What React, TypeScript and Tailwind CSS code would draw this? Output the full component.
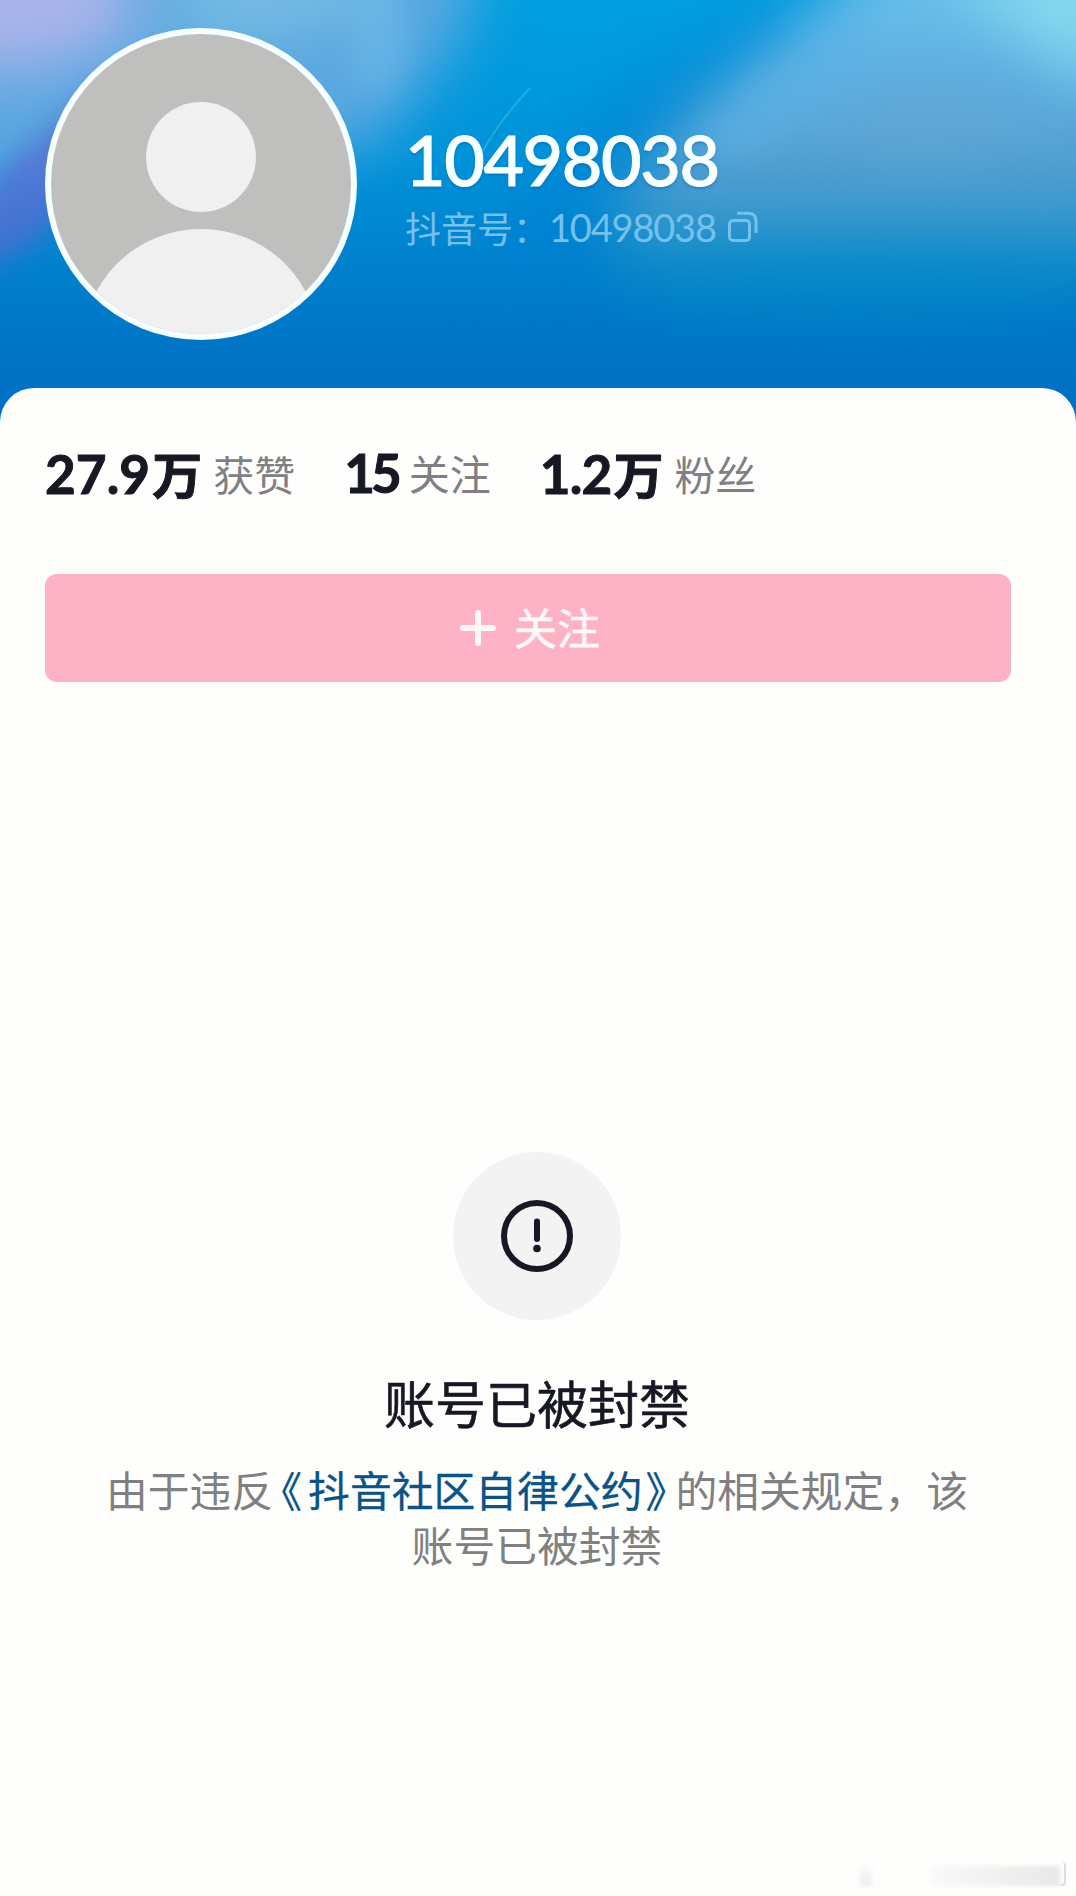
const stats = [
  { value: '27.9', unit: '万', label: '获赞', tracking: 'tracking-[0.1px]' },
  { value: '15', unit: '', label: '关注', tracking: 'tracking-[-4px]' },
  { value: '1.2', unit: '万', label: '粉丝', tracking: 'tracking-[-0.8px]' },
];

function HeaderBackdrop() {
  return (
    <svg
      className="absolute inset-0 h-full w-full"
      viewBox="0 0 1076 430"
      preserveAspectRatio="none"
      aria-hidden="true"
    >
      <defs>
        <linearGradient id="base" x1="0" y1="0" x2="0" y2="1">
          <stop offset="0" stopColor="#009fe0" />
          <stop offset="0.35" stopColor="#0094da" />
          <stop offset="0.65" stopColor="#007fcb" />
          <stop offset="0.82" stopColor="#0074c6" />
          <stop offset="1" stopColor="#006ec2" />
        </linearGradient>
        <linearGradient id="veil" x1="0" y1="0" x2="0" y2="1">
          <stop offset="0" stopColor="#6cc6ec" />
          <stop offset="0.35" stopColor="#60b2e4" />
          <stop offset="0.62" stopColor="#559fd0" />
          <stop offset="0.84" stopColor="#3a98c8" stopOpacity="0.8" />
          <stop offset="1" stopColor="#0088c8" stopOpacity="0" />
        </linearGradient>
        <filter id="soft" x="-50%" y="-50%" width="200%" height="200%" colorInterpolationFilters="sRGB">
          <feGaussianBlur stdDeviation="14" />
        </filter>
        <filter id="softer" x="-80%" y="-80%" width="260%" height="260%" colorInterpolationFilters="sRGB">
          <feGaussianBlur stdDeviation="30" />
        </filter>
      </defs>
      <rect width="1076" height="430" fill="url(#base)" />
      {/* left side glow */}
      <path d="M-80 -80H490L460 40L380 140L200 180L60 170L-80 220Z" fill="#5ca8e0" filter="url(#softer)" />
      <ellipse cx="0" cy="0" rx="140" ry="70" fill="#aab4ea" filter="url(#softer)" />
      <path d="M210 -40H400L340 20L250 34L150 20Z" fill="#86c8e6" opacity="0.7" filter="url(#softer)" />
      <path d="M350 -20H390L410 40L390 100L352 80Z" fill="#74c2ea" opacity="0.4" filter="url(#soft)" />
      <path d="M-60 250L10 160L60 120L110 80L90 170L40 240L-60 290Z" fill="#5a6cd2" opacity="0.75" filter="url(#soft)" />
      {/* darker fold through the middle */}
      <path d="M790 -10L620 110L470 260L500 300L640 180L820 10Z" fill="#007fd4" opacity="0.6" filter="url(#softer)" />
      {/* right side veil */}
      <path d="M890 -60L770 45L690 110L610 210L640 280L900 295L1150 285V-60Z" fill="url(#veil)" filter="url(#softer)" />
      <path d="M850 30L760 80L690 140L740 160L900 70Z" fill="#5cb2e6" opacity="0.5" filter="url(#soft)" />
      <ellipse cx="930" cy="120" rx="90" ry="40" fill="#68a6d2" opacity="0.4" filter="url(#softer)" />
      <path d="M930 -40H1120V90L1050 50Z" fill="#8ee0f0" opacity="0.85" filter="url(#softer)" />
      <ellipse cx="850" cy="285" rx="240" ry="32" fill="#008dc4" opacity="0.5" filter="url(#softer)" />
      <path d="M530 88Q500 120 482 152" stroke="#4bbbe4" strokeWidth="2" fill="none" opacity="0.5" />
    </svg>
  );
}

function Avatar() {
  return (
    <svg className="h-78 w-78 shrink-0" viewBox="0 0 312 312">
      <clipPath id="face">
        <circle cx="156" cy="156" r="150" />
      </clipPath>
      <circle cx="156" cy="156" r="156" fill="#f5ffff" />
      <g clipPath="url(#face)">
        <rect width="312" height="312" fill="#bfbfbe" />
        <circle cx="156" cy="129" r="55" fill="#f0f0f0" />
        <circle cx="156" cy="320" r="119" fill="#f0f0f0" />
      </g>
    </svg>
  );
}

function CopyIcon() {
  return (
    <svg className="ml-[11px] h-8 w-8" viewBox="0 0 32 32" fill="none" stroke="currentColor" strokeWidth="3">
      <rect x="2.500" y="9.500" width="20" height="20" rx="3.500" />
      <path d="M10 2.300H21Q29 2.300 29 10V22" />
    </svg>
  );
}

function Stat({ value, unit, label, tracking }: (typeof stats)[number]) {
  return (
    <div className="flex items-baseline">
      <span
        className={`font-['Lato',sans-serif] text-[53px] font-bold text-[#161823] [-webkit-text-stroke:1px_#161823] ${tracking}`}
      >
        {value}
      </span>
      {unit && (
        <span className="ml-0.5 text-[50px] font-bold text-[#161823] [-webkit-text-stroke:1px_#161823]">{unit}</span>
      )}
      <span className="relative -top-[3px] ml-[11px] text-[41px] font-normal text-[#808083]">{label}</span>
    </div>
  );
}

export default function App() {
  return (
    <div className="relative flex h-[1896px] w-[1076px] flex-col overflow-hidden bg-[#fefefd] font-['Noto_Sans_CJK_SC',sans-serif]">
      <header className="relative h-[430px] shrink-0">
        <HeaderBackdrop />
        <div className="relative flex pt-7 pl-[45px]">
          <Avatar />
          <div className="ml-[48px] flex flex-col pt-[93px]">
            <h1 className="font-['Lato',sans-serif] text-[70px] leading-[76px] font-medium tracking-[-1.4px] text-[#f8ffff] [-webkit-text-stroke:1px_#f8ffff] [text-shadow:0_2px_3px_rgba(0,60,120,0.35)]">
              10498038
            </h1>
            <div className="mt-[8px] flex items-center leading-[44px] text-[#74c1ee]">
              <span className="text-[36px] font-normal">抖音号：</span>
              <span className="font-['Lato',sans-serif] text-[38px] tracking-[-1.2px]">10498038</span>
              <CopyIcon />
            </div>
          </div>
        </div>
      </header>

      <main className="relative -mt-[42px] flex flex-1 flex-col rounded-t-[34px] bg-[#fefefd]">
        <section className="mt-[50px] flex h-[72px] items-center gap-[49px] pl-[45px] leading-[72px]">
          {stats.map((s) => (
            <Stat key={s.label} {...s} />
          ))}
        </section>

        <button className="mt-[64px] ml-[45px] flex h-[108px] w-[966px] items-center justify-center gap-[18px] rounded-xl bg-[#feb2c5] pl-1 text-[43px] text-[#fff7f8]">
          <svg className="h-9 w-9" viewBox="0 0 36 36" stroke="currentColor" strokeWidth="6" strokeLinecap="round">
            <path d="M18 3V33M3 18H33" />
          </svg>
          <span className="relative -top-0.5 [-webkit-text-stroke:0.6px_#fff7f8]">关注</span>
        </button>

        <section className="mt-[470px] flex flex-col items-center pr-0.5">
          <div className="flex h-42 w-42 items-center justify-center rounded-full bg-[#f3f3f3]">
            <svg className="h-18 w-18" viewBox="0 0 72 72" fill="none" stroke="#161823">
              <circle cx="36" cy="36" r="33" strokeWidth="6" />
              <path d="M36 21.500V39" strokeWidth="6" strokeLinecap="round" />
              <circle cx="36" cy="48.500" r="3.800" fill="#161823" stroke="none" />
            </svg>
          </div>
          <h2 className="mt-[45px] text-[51px] leading-[74px] font-normal text-[#161823] [-webkit-text-stroke:0.6px_#161823]">
            账号已被封禁
          </h2>
          <p className="mt-[23px] text-center text-[41.800px] leading-[55px] font-normal text-[#808083]">
            由于违反
            <a className="text-[#0b5286] [-webkit-text-stroke:0.3px_#0b5286]">
              <span className="mr-1.5 ml-2 [font-feature-settings:'halt']">《</span>
              抖音社区自律公约
              <span className="mr-[9px] ml-[3px] [font-feature-settings:'halt']">》</span>
            </a>
            的相关规定，该
            <br />
            账号已被封禁
          </p>
        </section>

        {/* worn-out corner stamp */}
        <div className="absolute right-[10px] bottom-[10px] flex h-6 w-[206px] items-end">
          <span className="h-6 w-3 bg-linear-to-b from-transparent to-[#ebebea] blur-[2px]" />
          <span className="ml-[60px] h-5 flex-1 bg-linear-to-r from-[#f9f9f8] to-[#e8e8e7] blur-[2px]" />
          <span className="h-6 w-1.5 rounded-r-sm border-r-2 border-b-2 border-[#dededd]" />
        </div>
      </main>
    </div>
  );
}
